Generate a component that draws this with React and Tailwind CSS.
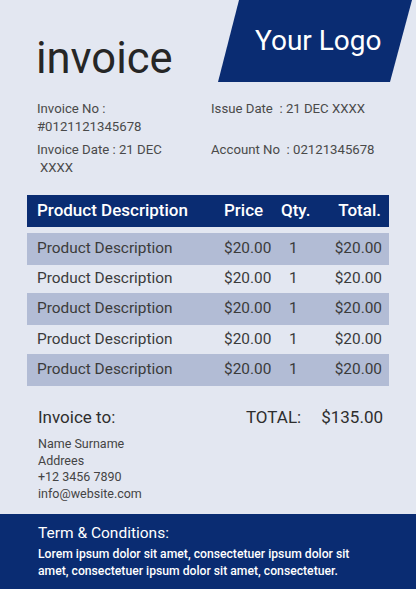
const rows = [
  { shaded: true, h: "h-8" },
  { shaded: false, h: "h-7" },
  { shaded: true, h: "h-8" },
  { shaded: false, h: "h-[29px]" },
  { shaded: true, h: "h-8" },
];

function Logo() {
  return (
    <div className="relative w-[195px] h-[82px] shrink-0">
      <svg className="absolute inset-0" width="195" height="82" viewBox="0 0 195 82">
        <polygon points="21,0 194,0 172,82 0,82" fill="#0a2c72" />
      </svg>
      <span className="absolute left-[37px] top-[23px] text-[28px] leading-[35px] text-white">
        Your Logo
      </span>
    </div>
  );
}

export default function App() {
  return (
    <div
      className="w-[416px] h-[589px] bg-[#e3e7f1] flex flex-col overflow-hidden"
      style={{ fontFamily: "Roboto, 'Liberation Sans', sans-serif" }}
    >
      <div className="flex justify-between pl-[36px] pr-[3px]">
        <h1 className="pt-[33px] text-[43.5px] leading-[52px] text-[#262626]">invoice</h1>
        <Logo />
      </div>

      <div className="grid grid-cols-[174px_1fr] pl-[37px] pt-[15px] text-[13.2px] leading-[18px] text-[#4a4a4a]">
        <div>
          <p>Invoice No :</p>
          <p>#0121121345678</p>
        </div>
        <p>Issue Date&nbsp; : 21 DEC XXXX</p>
        <div className="pt-[5px]">
          <p>Invoice Date : 21 DEC</p>
          <p className="pl-[3px]">XXXX</p>
        </div>
        <p className="pt-[5px]">Account No&nbsp; : 02121345678</p>
      </div>

      <div className="mx-[27px] mt-[18px] w-[362px]">
        <div className="flex items-center h-8 bg-[#0a2c72] text-white text-[17px] font-medium">
          <span className="pl-[10px] w-[197px]">Product Description</span>
          <span className="w-[57px]">Price</span>
          <span className="w-[50px]">Qty.</span>
          <span className="flex-1 text-right pr-[8px]">Total.</span>
        </div>
        <div className="mt-[6px]">
          {rows.map((r, i) => (
            <div
              key={i}
              className={`flex items-center ${r.h} text-[15.4px] text-[#3b3b3b] ${r.shaded ? "bg-[#b2bcd5]" : ""}`}
            >
              <span className="pl-[10px] w-[197px]">Product Description</span>
              <span className="w-[57px]">$20.00</span>
              <span className="w-[50px] pl-[8px]">1</span>
              <span className="flex-1 text-right pr-[7px]">$20.00</span>
            </div>
          ))}
        </div>
      </div>

      <div className="flex justify-between pl-[38px] pr-[33px] mt-[20px] text-[17px] leading-[22px] text-[#2e2e2e]">
        <span>Invoice to:</span>
        <span className="flex gap-[20px]">
          <span>TOTAL:</span>
          <span>$135.00</span>
        </span>
      </div>
      <div className="pl-[38px] mt-[8px] text-[12.5px] leading-[16.6px] text-[#444]">
        <p>Name Surname</p>
        <p>Addrees</p>
        <p>+12 3456 7890</p>
        <p>info@website.com</p>
      </div>

      <div className="mt-auto h-[75px] bg-[#0a2c72] text-white pl-[38px] pt-[9px]">
        <p className="text-[15.5px] leading-[20px]">Term &amp; Conditions:</p>
        <p className="mt-[3px] text-[12.2px] leading-[17px] font-medium">
          Lorem ipsum dolor sit amet, consectetuer ipsum dolor sit
          <br />
          amet, consectetuer ipsum dolor sit amet, consectetuer.
        </p>
      </div>
    </div>
  );
}
